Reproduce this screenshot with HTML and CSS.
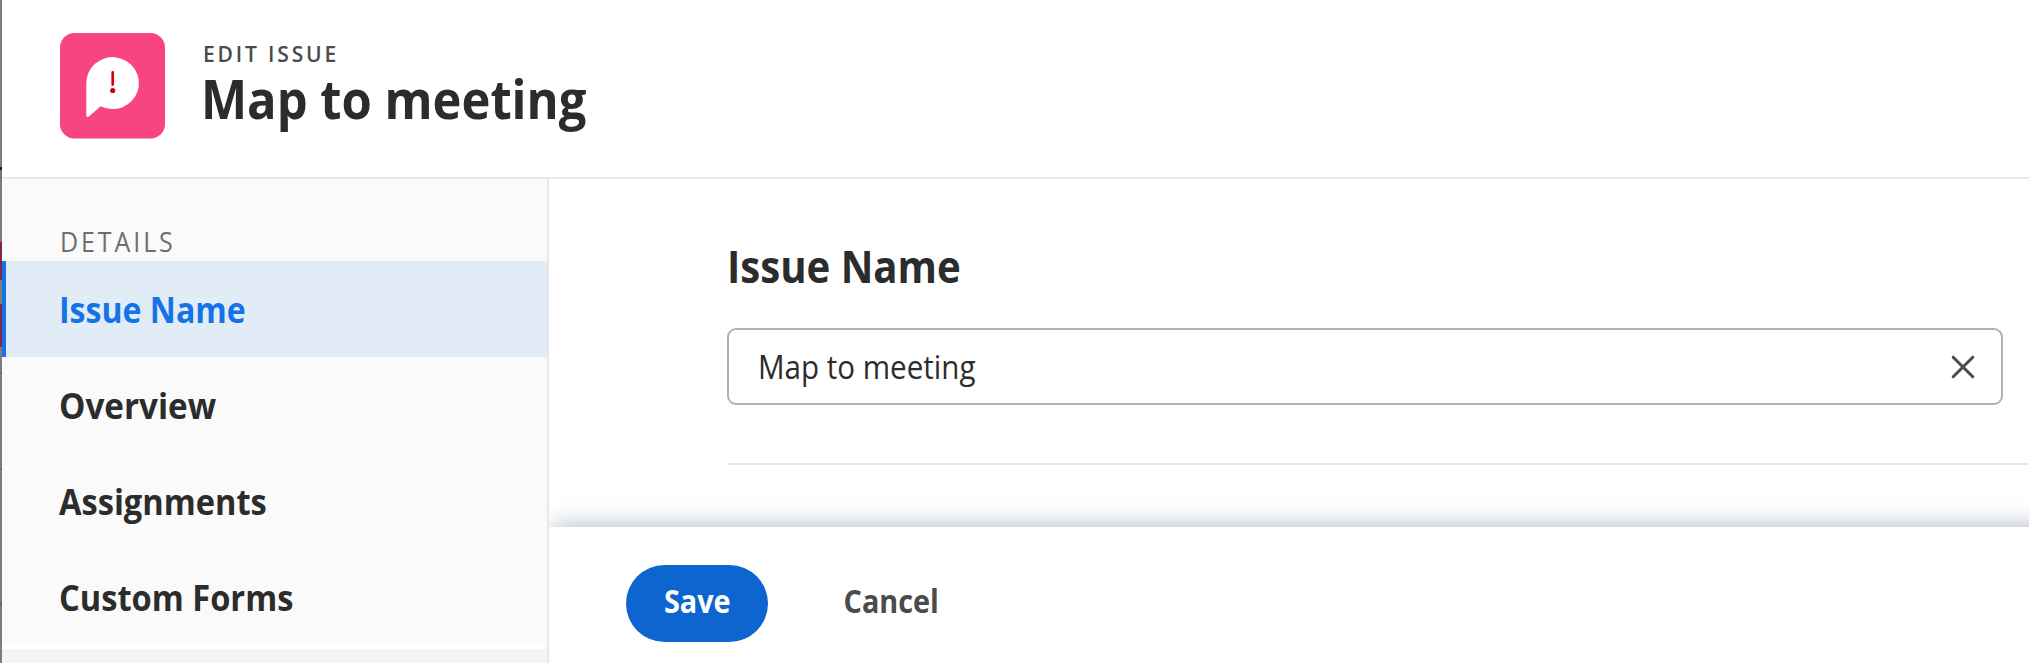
FILE: index.html
```
<!DOCTYPE html>
<html lang="en">
<head>
<meta charset="utf-8">
<title>Edit issue</title>
<link rel="stylesheet" href="styles.css">
</head>
<body>
<div class="backdrop"></div>
<div class="dialog">
  <header class="header">
    <svg class="tile" viewBox="0 0 105 106">
      <rect width="105" height="105.6" rx="14.5" fill="#f74581"/>
      <path d="M26.3 50.5A26.3 26 0 1 1 40.5 73.2L29 83.6Q26.3 85 26.3 82Z" fill="#fff"/>
      <path d="M52.7 39.3V51.6" stroke="#d3000a" stroke-width="2.6" stroke-linecap="round"/>
      <circle cx="52.7" cy="57.5" r="2.6" fill="#d3000a"/>
    </svg>
    <div class="titles">
      <div class="eyebrow"><span class="fit regular">EDIT ISSUE</span></div>
      <h1 class="title"><span class="fit">Map to meeting</span></h1>
    </div>
  </header>
  <div class="body">
    <nav class="sidebar">
      <div class="group"><span class="fit regular">DETAILS</span></div>
      <a class="item active"><span class="fit issue">Issue Name</span></a>
      <a class="item"><span class="fit overview">Overview</span></a>
      <a class="item"><span class="fit">Assignments</span></a>
      <a class="item"><span class="fit">Custom Forms</span></a>
      <div class="next"></div>
    </nav>
    <main class="main">
      <section class="form">
        <h2 class="label"><span class="fit">Issue Name</span></h2>
        <div class="input">
          <span class="fit value">Map to meeting</span>
          <svg class="clear" viewBox="0 0 24 24"><path d="M2.2 2.2 21.8 21.8M21.8 2.2 2.2 21.8" stroke="#4b4b4b" stroke-width="3" stroke-linecap="round"/></svg>
        </div>
        <div class="divider"></div>
      </section>
      <footer class="footer">
        <button class="save"><span>Save</span></button>
        <button class="cancel"><span>Cancel</span></button>
      </footer>
    </main>
  </div>
</div>
</body>
</html>
```
FILE: styles.css
```
* { box-sizing: border-box; }
body {
  margin: 0;
  width: 2029px;
  height: 663px;
  display: flex;
  overflow: hidden;
  background: #fff;
  color: #2c2c2c;
  font-family: "Open Sans", "Noto Sans", sans-serif;
}
.backdrop {
  flex: none;
  width: 2px;
  background: linear-gradient(#7d7d7d 167px, #222 167px 170px, #5f7d82 170px 182px, #7d7d7d 182px 242px, #822447 242px 280px, #857f72 280px 304px, #822447 304px 347px, #7d7d7d 347px 372px, #6c6c6c 372px 374px, #7d7d7d 374px 468px, #6c6c6c 468px 470px, #7d7d7d 470px 602px, #6a6a6a 602px 606px, #7d7d7d 606px);
}
.dialog { flex: 1; display: flex; flex-direction: column; min-width: 0; }
/* Slightly narrowed glyphs */
.fit {
  display: inline-block;
  white-space: nowrap;
  transform: scaleX(.896);
  transform-origin: left;
}
.regular { transform: scaleX(.94); }
.value { transform: scaleX(.918); }
.issue { transform: scaleX(.881); }
.overview { transform: scaleX(.913); }
.header {
  flex: none;
  display: flex;
  height: 179px;
  padding: 33px 0 0 58px;
  gap: 35px;
  border-bottom: 2px solid #e8e8e8;
}
.tile { width: 105px; height: 106px; }
.titles { padding-top: 6px; }
.eyebrow {
  padding-left: 3px;
  font-size: 22.4px;
  font-weight: 640;
  line-height: 30px;
  letter-spacing: 3px;
  color: #4b4b4b;
}
.title { margin: 0; padding-left: 1px; font-size: 54.6px; font-weight: 670; line-height: 58px; }
.body { flex: 1; display: flex; min-height: 0; }
.sidebar {
  flex: none;
  display: flex;
  flex-direction: column;
  width: 547px;
  padding-top: 45px;
  background: #fafafa;
  border-right: 2px solid #e8e8e8;
}
.group {
  height: 37px;
  padding-left: 58px;
  font-size: 26.6px;
  line-height: 36px;
  letter-spacing: 3.1px;
  color: #6e6e6e;
}
.item {
  flex: none;
  height: 96px;
  padding-left: 57px;
  font-size: 36.4px;
  font-weight: 670;
  line-height: 96px;
}
.active {
  color: #1473e6;
  background: #e2ecf7;
  border-left: 4px solid #1473e6;
  padding-left: 53px;
}
.next { flex: 1; border-top: 4px solid #fff; background: #f4f4f4; }
.main { flex: 1; display: flex; flex-direction: column; min-width: 0; }
.form { height: 348px; padding: 0 0 0 178px; }
.label {
  margin: 0;
  padding: 57px 0 32px;
  font-size: 44.8px;
  font-weight: 670;
  line-height: 60px;
}
.input {
  display: flex;
  align-items: center;
  justify-content: space-between;
  width: 1276px;
  height: 77px;
  padding: 0 26px 0 29px;
  border: 2px solid #b1b1b1;
  border-radius: 9px;
  font-size: 32.2px;
}
.clear { width: 24px; height: 24px; }
.divider { margin-top: 58px; height: 2px; background: #e8e8e8; }
.footer {
  flex: 1;
  display: flex;
  align-items: flex-start;
  margin-right: -60px;
  padding: 38px 0 0 77px;
  gap: 47px;
  background: #fff;
  box-shadow: 3px 0 24px rgba(45, 70, 90, .4);
  clip-path: inset(-60px 0 0 0);
}
.save, .cancel {
  height: 77px;
  padding: 0 0 6px;
  border: 0;
  border-radius: 39px;
  font: 700 32.2px "Open Sans", sans-serif;
}
.save span, .cancel span { display: inline-block; transform: scaleX(.895); }
.save { width: 142px; color: #fff; background: #0d66d0; }
.cancel { width: 153px; font-weight: 660; color: #4b4b4b; background: none; }
```
